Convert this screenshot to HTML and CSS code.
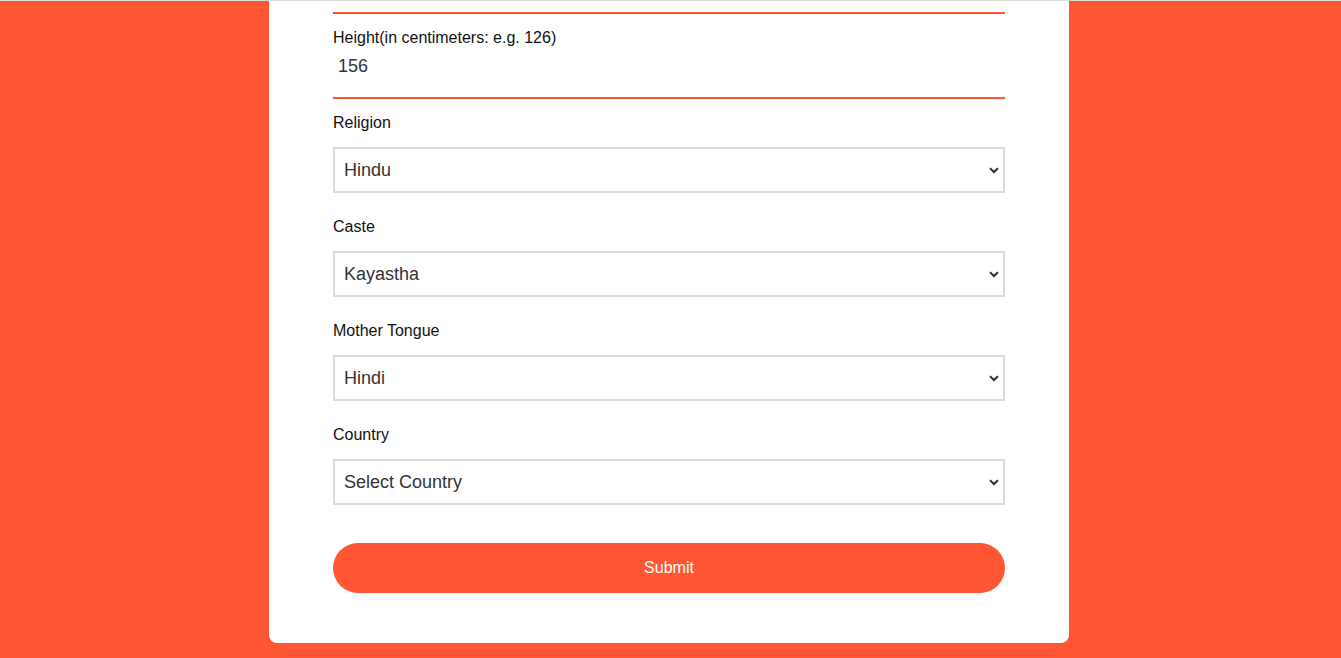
FILE: index.html
```html
<!DOCTYPE html>
<html lang="en">
<head>
<meta charset="utf-8">
<title>Profile Form</title>
<link rel="stylesheet" href="styles.css">
</head>
<body>
<div class="page">
  <form class="card">
    <div class="rule"></div>
    <div class="text-field">
      <label class="label" for="height">Height(in centimeters: e.g. 126)</label>
      <input class="text-input" id="height" type="text" value="156">
    </div>
    <div class="field">
      <label class="label" for="religion">Religion</label>
      <div class="select-wrap">
        <select class="select" id="religion"><option>Hindu</option></select>
        <svg class="chev" width="10" height="7" viewBox="0 0 10 7"><path d="M1 1.2 L5 5 L9 1.2" fill="none" stroke="#333" stroke-width="2"/></svg>
      </div>
    </div>
    <div class="field">
      <label class="label" for="caste">Caste</label>
      <div class="select-wrap">
        <select class="select" id="caste"><option>Kayastha</option></select>
        <svg class="chev" width="10" height="7" viewBox="0 0 10 7"><path d="M1 1.2 L5 5 L9 1.2" fill="none" stroke="#333" stroke-width="2"/></svg>
      </div>
    </div>
    <div class="field">
      <label class="label" for="tongue">Mother Tongue</label>
      <div class="select-wrap">
        <select class="select" id="tongue"><option>Hindi</option></select>
        <svg class="chev" width="10" height="7" viewBox="0 0 10 7"><path d="M1 1.2 L5 5 L9 1.2" fill="none" stroke="#333" stroke-width="2"/></svg>
      </div>
    </div>
    <div class="field">
      <label class="label" for="country">Country</label>
      <div class="select-wrap">
        <select class="select" id="country"><option>Select Country</option></select>
        <svg class="chev" width="10" height="7" viewBox="0 0 10 7"><path d="M1 1.2 L5 5 L9 1.2" fill="none" stroke="#333" stroke-width="2"/></svg>
      </div>
    </div>
    <button class="submit" type="button">Submit</button>
  </form>
</div>
</body>
</html>
```
FILE: styles.css
```css
html, body {
  margin: 0;
  padding: 0;
}
body {
  background: #ff5733;
  border-top: 1px solid #dcdcdc;
  font-family: "Liberation Sans", Arial, sans-serif;
  min-height: 657px;
}
.page {
  display: flex;
  justify-content: center;
  padding-right: 3px;
}
.card {
  width: 800px;
  box-sizing: border-box;
  background: #fff;
  border-radius: 0 0 8px 8px;
  padding: 11px 64px 50px;
  display: flex;
  flex-direction: column;
}
.rule {
  height: 2px;
  background: #ff5733;
}
.label {
  display: block;
  font-size: 16px;
  line-height: 18px;
  color: #111;
}
.text-field {
  padding-top: 15px;
  display: flex;
  flex-direction: column;
}
.text-input {
  display: block;
  border: 0;
  border-bottom: 2px solid #ff5733;
  outline: none;
  font-family: "Liberation Sans", Arial, sans-serif;
  font-size: 18px;
  line-height: 21px;
  height: 21px;
  color: #333;
  padding: 9px 5px 20px;
  margin: 0;
  background: transparent;
}
.field {
  display: flex;
  flex-direction: column;
  gap: 15px;
  margin-top: 15px;
}
.field + .field {
  margin-top: 25px;
}
.select-wrap {
  position: relative;
}
.select {
  appearance: none;
  -webkit-appearance: none;
  display: block;
  width: 100%;
  height: 46px;
  box-sizing: border-box;
  border: 2px solid #dcdcdc;
  border-radius: 0;
  background: #fff;
  padding: 0 30px 0 9px;
  margin: 0;
  font-family: "Liberation Sans", Arial, sans-serif;
  font-size: 18px;
  color: #333;
  outline: none;
}
.chev {
  position: absolute;
  right: 6px;
  top: 20px;
  pointer-events: none;
}
.submit {
  margin-top: 38px;
  height: 50px;
  border: 0;
  border-radius: 25px;
  background: #ff5733;
  color: #fff;
  font-family: "Liberation Sans", Arial, sans-serif;
  font-size: 16px;
  padding: 0;
  cursor: pointer;
}
```
